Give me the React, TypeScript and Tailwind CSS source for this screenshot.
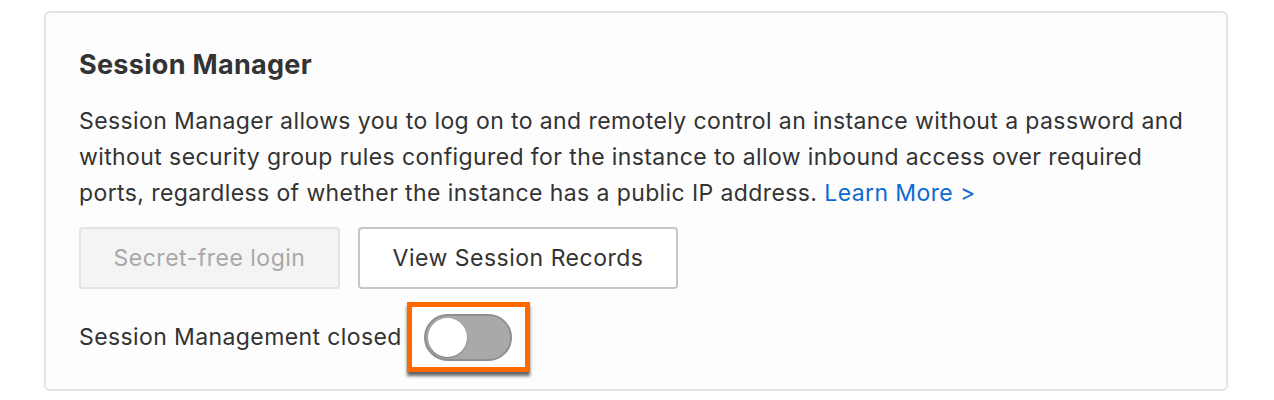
import React from 'react';

const Toggle: React.FC<{ on?: boolean }> = ({ on = false }) => (
  <div className={`w-[88px] h-[47px] rounded-full border-2 border-[#8f8f8f] p-[2px] flex items-center ${on ? 'justify-end bg-[#ff6a00]' : 'justify-start bg-[#a9a9a9]'}`}>
    <div className="w-[39px] h-[39px] rounded-full bg-white shadow-[0_1px_2px_rgba(0,0,0,0.25)]" />
  </div>
);

export default function App() {
  return (
    <div className="w-[1274px] h-[400px] bg-white px-[44px] pt-[11px] font-['Inter',sans-serif]">
      <div className="w-[1184px] h-[380px] border-2 border-[#e4e4e4] rounded-[6px] bg-[#fdfdfd] px-[33px] pt-[34px]">
        <h2 className="text-[27px] leading-[36px] font-bold text-[#333333] tracking-[0.3px]">Session Manager</h2>
        <p className="mt-[20px] text-[23px] leading-[36px] text-[#333333] tracking-[0.4px] whitespace-nowrap">
          Session Manager allows you to log on to and remotely control an instance without a password and
          <br />
          without security group rules configured for the instance to allow inbound access over required
          <br />
          ports, regardless of whether the instance has a public IP address.{' '}
          <a className="text-[#0b6bd3]">Learn More &gt;</a>
        </p>
        <div className="mt-[16px] flex gap-[18px]">
          <button className="h-[62px] w-[261px] rounded-[4px] border-2 border-[#e3e3e3] bg-[#f4f4f4] text-[23px] tracking-[0.5px] text-[#a8a8a8]">
            Secret-free login
          </button>
          <button className="h-[62px] w-[320px] rounded-[4px] border-2 border-[#c6c6c6] bg-white text-[23px] tracking-[0.5px] text-[#333333]">
            View Session Records
          </button>
        </div>
        <div className="mt-[13px] flex items-center gap-[5px]">
          <span className="text-[23px] tracking-[0.4px] text-[#333333]">Session Management closed</span>
          <div className="w-[123px] h-[70px] border-[5px] border-[#ff6a00] bg-white flex items-center justify-center shadow-[0_4px_3px_rgba(0,0,0,0.6)]">
            <Toggle />
          </div>
        </div>
      </div>
    </div>
  );
}
